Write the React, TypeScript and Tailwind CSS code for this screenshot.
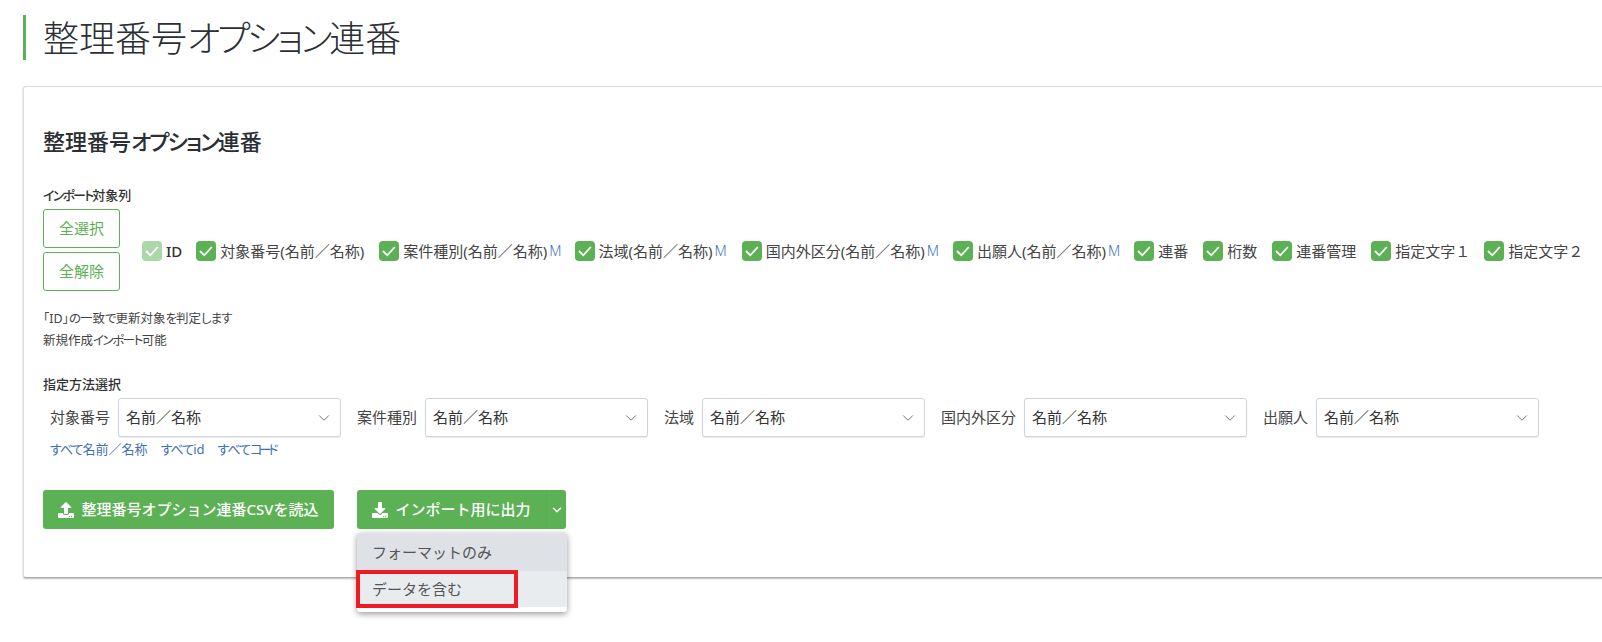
import { ChevronDown } from "lucide-react";
import { FaDownload, FaUpload } from "react-icons/fa";

const font = { fontFamily: '"Noto Sans", "Noto Sans CJK JP", sans-serif' };

function Cb({ label, m, disabled, className }: { label: string; m?: boolean; disabled?: boolean; className?: string }) {
  return (
    <div className={"flex items-center " + (className ?? "")}>
      <div className={"flex h-5 w-5 items-center justify-center rounded-[4px] bg-[#5cb155] " + (disabled ? "opacity-50" : "")}>
        <svg viewBox="0 0 20 20" className="h-5 w-5" fill="none" stroke="#fff" strokeWidth="1.8">
          <path d="M4 10 L8.3 14.3 L15.8 6" />
        </svg>
      </div>
      <span className={"ml-1 text-[15px] leading-5 " + (disabled ? "font-medium text-[#333]" : "text-[#444]")}>{label}</span>
      {m && <span className="ml-[2px] text-[14px] font-light leading-5 text-[#3f74c4]">M</span>}
    </div>
  );
}

function Sel({ label, labelWidth }: { label: string; labelWidth: string }) {
  return (
    <div className="flex items-center gap-2">
      <span className={"shrink-0 whitespace-nowrap text-right text-[15px] text-[#444] " + labelWidth}>{label}</span>
      <div className="flex h-[39px] w-[223px] items-center justify-between rounded-[3px] border border-[#ced4da] bg-white pl-[7px] pr-[7px] shadow-[0_1px_1px_rgba(0,0,0,0.08)]">
        <span className="text-[15px] text-[#333]">名前／名称</span>
        <ChevronDown className="h-[18px] w-[18px] text-[#6c757d]" strokeWidth={1.3} />
      </div>
    </div>
  );
}

export default function App() {
  return (
    <div className="h-[642px] w-[1602px] overflow-hidden bg-white pt-[15px] pl-[23px]" style={font}>
      <h1 className="flex h-[45px] items-center border-l-[3px] border-[#5cb155] pl-[17px] pt-[3px] text-[36px] font-light leading-none text-[#2b2f33] [font-feature-settings:'palt']">
        <span>整理番号<span className="tracking-[-3.2px]">オプション</span>連番</span>
      </h1>
      <div className="mt-[26px] h-[492px] w-[1620px] rounded-[3px] border border-[#dddddd] border-b-[#aaaaaa] bg-white pl-[19px] pt-[39px] shadow-[0_1px_2px_rgba(0,0,0,0.25)]">
        <h2 className="text-[22px] font-medium leading-[30px] text-[#2b2f33] [font-feature-settings:'palt']">
          整理番号<span className="tracking-[-2px]">オプション</span>連番
        </h2>
        <div className="mt-[31px] text-[13px] font-medium leading-[16px] text-[#333] [font-feature-settings:'palt']">
          <span className="tracking-[-1.8px]">インポート</span>対象列
        </div>
        <div className="mt-[6px] flex items-center">
          <div className="flex w-[77px] flex-col gap-1">
            <button className="h-[39px] rounded-[3px] border border-[#5cb155] text-[15px] text-[#5cb155]">全選択</button>
            <button className="h-[39px] rounded-[3px] border border-[#5cb155] text-[15px] text-[#5cb155]">全解除</button>
          </div>
          <div className="ml-[22px] flex items-center pt-[2px]">
            <Cb label="ID" disabled className="mr-[14px]" />
            <Cb label="対象番号(名前／名称)" className="mr-[15px]" />
            <Cb label="案件種別(名前／名称)" m className="mr-[13px]" />
            <Cb label="法域(名前／名称)" m className="mr-[15px]" />
            <Cb label="国内外区分(名前／名称)" m className="mr-[14px]" />
            <Cb label="出願人(名前／名称)" m className="mr-[14px]" />
            <Cb label="連番" className="mr-[15px]" />
            <Cb label="桁数" className="mr-[15px]" />
            <Cb label="連番管理" className="mr-[15px]" />
            <Cb label="指定文字１" className="mr-[14px]" />
            <Cb label="指定文字２" />
          </div>
        </div>
        <div className="mt-[17px] text-[12.5px] leading-[22px] text-[#444] [font-feature-settings:'palt']">
          <div>
            「ID」<span className="tracking-[-1px]">の</span>一致<span className="tracking-[-1px]">で</span>更新対象<span className="tracking-[-1px]">を</span>判定<span className="tracking-[-1px]">します</span>
          </div>
          <div>
            新規作成<span className="tracking-[-1.5px]">インポート</span>可能
          </div>
        </div>
        <div className="mt-[24px] text-[13px] font-medium leading-[16px] text-[#333]">指定方法選択</div>
        <div className="mt-[6px] flex gap-[16px] pl-[7px]">
          <Sel label="対象番号" labelWidth="w-[60px]" />
          <Sel label="案件種別" labelWidth="w-[60px]" />
          <Sel label="法域" labelWidth="w-[30px]" />
          <Sel label="国内外区分" labelWidth="w-[75px]" />
          <Sel label="出願人" labelWidth="w-[45px]" />
        </div>
        <div className="mt-[4px] flex gap-[13px] pl-[7px] text-[13px] leading-[16px] text-[#3f6fb8] [font-feature-settings:'palt']">
          <span><span className="tracking-[-1px]">すべて</span>名前／名称</span>
          <span><span className="tracking-[-1px]">すべて</span>id</span>
          <span><span className="tracking-[-1px]">すべて</span><span className="tracking-[-3.5px]">コード</span></span>
        </div>
        <div className="mt-[33px] flex gap-[23px]">
          <button className="flex h-[39px] w-[291px] items-center justify-center gap-[7px] rounded-[3px] bg-[#5cb155] text-[15px] font-medium text-white">
            <FaUpload className="h-[16px] w-[16px]" />
            整理番号オプション連番CSVを読込
          </button>
          <div className="relative flex">
            <button className="flex h-[39px] w-[189px] items-center justify-center gap-[7px] rounded-l-[3px] bg-[#5cb155] text-[15px] font-medium text-white">
              <FaDownload className="h-[16px] w-[16px]" />
              インポート用に出力
            </button>
            <button className="flex h-[39px] w-[20px] items-center justify-center rounded-r-[3px] border-l border-[#59ad52] bg-[#5cb155] text-white">
              <ChevronDown className="h-[14px] w-[14px]" strokeWidth={2.5} />
            </button>
            <div className="absolute left-0 top-[43px] h-[79px] w-[210px] rounded-[3px] bg-white pb-[5px] shadow-[0_2px_6px_rgba(0,0,0,0.4)]">
              <div className="flex h-[38px] items-center rounded-t-[3px] bg-[#dee2e6] pl-[15px] text-[15px] text-[#555]">フォーマットのみ</div>
              <div className="relative flex h-[36px] items-center bg-[#e9ecef] pl-[15px] text-[15px] text-[#555]">
                データを含む
                <div className="absolute left-[-1px] top-[-1px] h-[38px] w-[162px] border-[4px] border-[#ed1c24]" />
              </div>
            </div>
          </div>
        </div>
      </div>
    </div>
  );
}
